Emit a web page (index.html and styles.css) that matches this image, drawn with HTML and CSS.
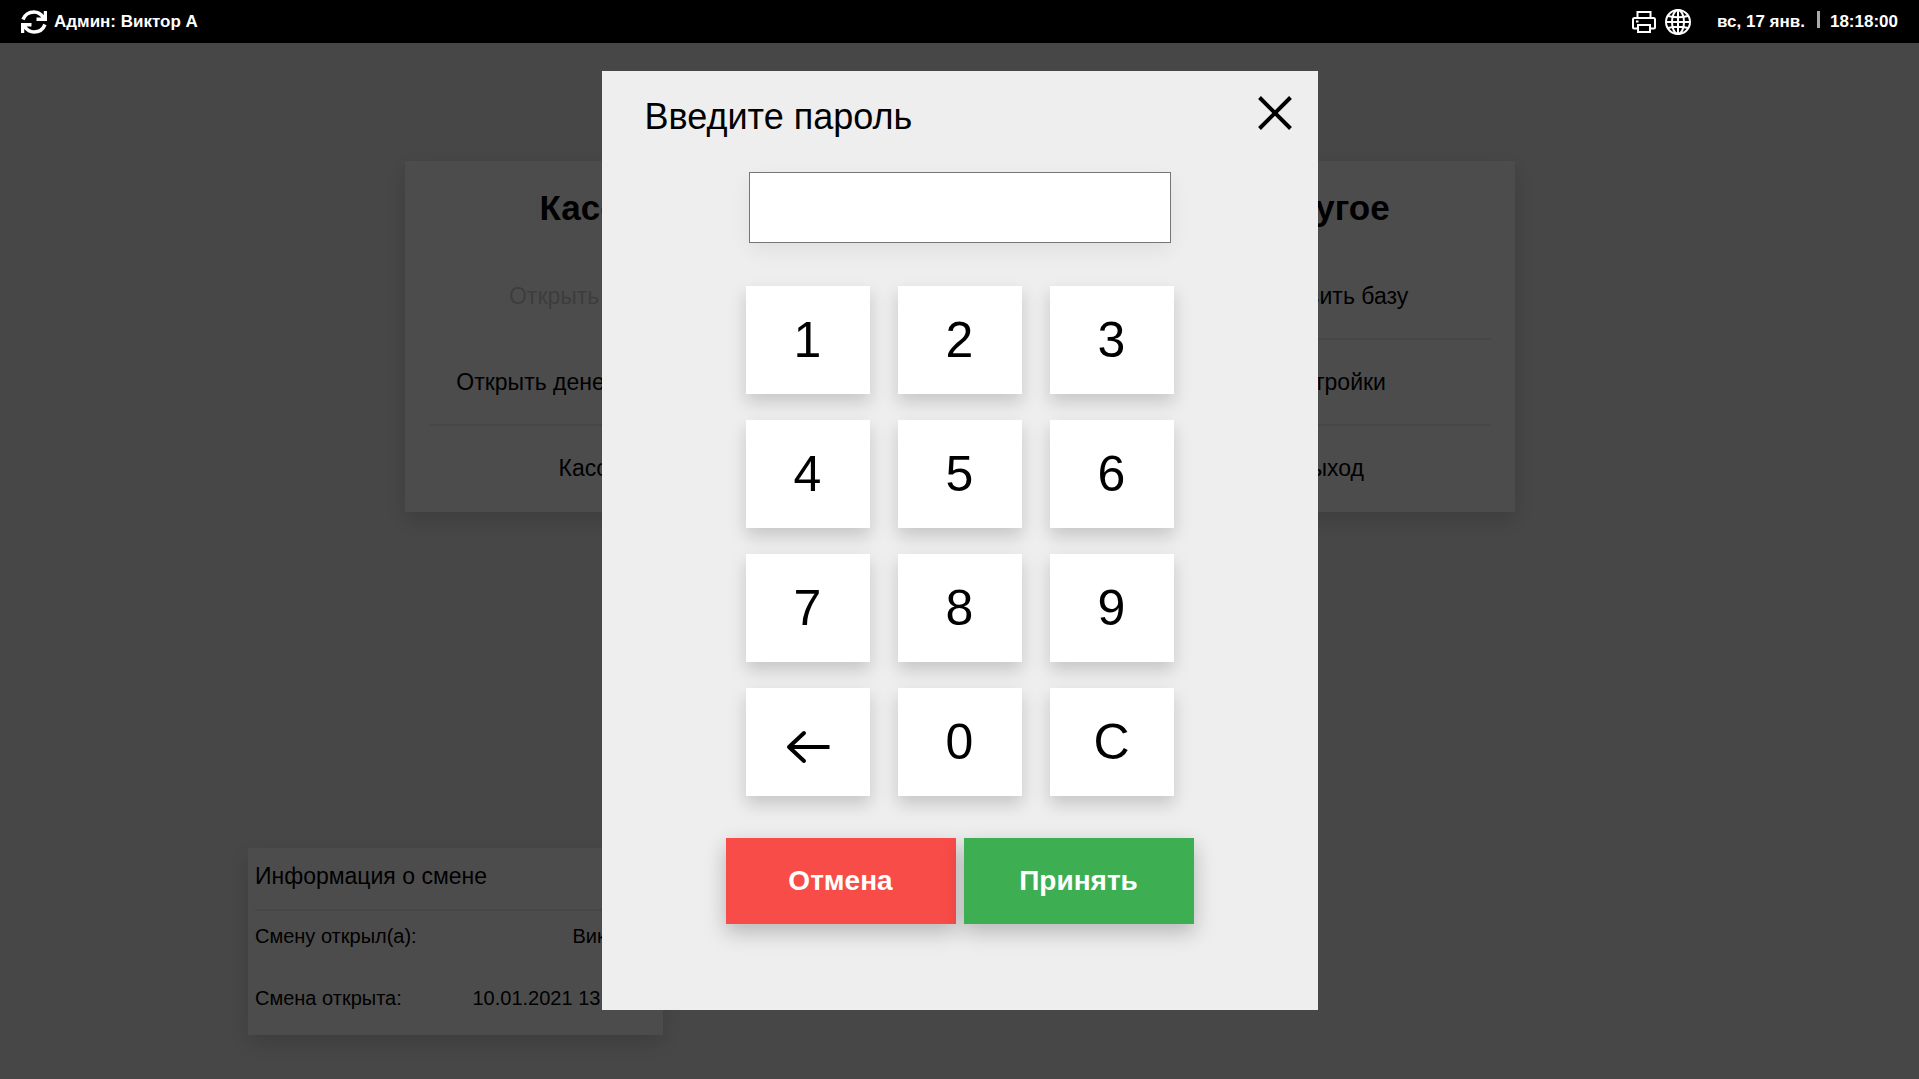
FILE: index.html
```html
<!DOCTYPE html>
<html lang="ru">
<head>
<meta charset="utf-8">
<meta name="viewport" content="width=device-width, initial-scale=1">
<title>Введите пароль</title>
<link rel="stylesheet" href="styles.css">
</head>
<body>
<header class="topbar">
  <div class="user">
    <svg class="icon-sync" viewBox="0 0 26 24" fill="none" stroke="#fff" stroke-width="3.500" aria-hidden="true">
      <path d="M2 9.500C4 4.500 8.500 2 13 2C17 2 20 4 22.500 7.500"/>
      <path d="M24.500 1V9.300H15.500"/>
      <path d="M19.500 9L24 4V9Z" fill="#fff" stroke-width="1"/>
      <path d="M24 14.500C22 19.500 17.500 22 13 22C9 22 6 20 3.500 16.500"/>
      <path d="M1.500 23V14.700H10.500"/>
      <path d="M6.500 15L2 20V15Z" fill="#fff" stroke-width="1"/>
    </svg>
    <span>Админ: Виктор А</span>
  </div>
  <div class="status">
    <svg class="icon-printer" viewBox="0 0 26 24" fill="none" stroke="#fff" stroke-width="2" aria-hidden="true">
      <path d="M6.500 8V2H19.500V8"/>
      <path d="M6.500 18.500H3Q2 18.500 2 17.500V9.500Q2 8 3.500 8H22.500Q24 8 24 9.500V17.500Q24 18.500 23 18.500H19.500"/>
      <path d="M7 15H19V22H7Z"/>
      <path d="M5 11.500H7.500"/>
    </svg>
    <svg class="icon-globe" viewBox="0 0 26 26" fill="none" stroke="#fff" stroke-width="2" aria-hidden="true">
      <circle cx="13" cy="13" r="12"/>
      <ellipse cx="13" cy="13" rx="6" ry="12"/>
      <path d="M13 1V25M1 13H25M3 7Q13 9.500 23 7M3 19Q13 16.500 23 19"/>
    </svg>
    <span class="date">вс, 17 янв.</span>
    <span class="divider"></span>
    <time>18:18:00</time>
  </div>
</header>
<main class="workspace">
  <div class="panel menu">
    <section class="menu-column">
      <h2>Касса</h2>
      <button class="menu-item" disabled>Открыть смену</button>
      <button class="menu-item">Открыть денежный ящик</button>
      <button class="menu-item">Касса</button>
    </section>
    <section class="menu-column menu-column-last">
      <h2>Другое</h2>
      <button class="menu-item">Обновить базу</button>
      <button class="menu-item">Настройки</button>
      <button class="menu-item">Выход</button>
    </section>
  </div>
  <section class="panel shift">
    <h3>Информация о смене</h3>
    <dl>
      <div class="shift-row"><dt>Смену открыл(а):</dt><dd>Виктор А</dd></div>
      <div class="shift-row"><dt>Смена открыта:</dt><dd>10.01.2021 13:00:00</dd></div>
    </dl>
  </section>
  <div class="overlay">
    <form class="dialog" role="dialog" aria-labelledby="dialog-title">
      <div class="dialog-head">
        <h1 id="dialog-title"><label for="password">Введите пароль</label></h1>
        <button class="close" type="button" aria-label="Закрыть">
          <svg viewBox="0 0 34 34" fill="none" stroke="#000" stroke-width="4" aria-hidden="true"><path d="M1.500 1.500L32.500 32.500M32.500 1.500L1.500 32.500"/></svg>
        </button>
      </div>
      <input class="password" id="password" type="password">
      <div class="keypad">
        <button class="key" type="button">1</button>
        <button class="key" type="button">2</button>
        <button class="key" type="button">3</button>
        <button class="key" type="button">4</button>
        <button class="key" type="button">5</button>
        <button class="key" type="button">6</button>
        <button class="key" type="button">7</button>
        <button class="key" type="button">8</button>
        <button class="key" type="button">9</button>
        <button class="key key-back" type="button" aria-label="Стереть">
          <svg viewBox="0 0 44 34" fill="none" stroke="#000" stroke-width="4" aria-hidden="true"><path d="M3 17H43.500"/><path d="M18 3L3 17L18 31" stroke-linecap="round" stroke-linejoin="round"/></svg>
        </button>
        <button class="key" type="button">0</button>
        <button class="key" type="button">C</button>
      </div>
      <div class="actions">
        <button class="action cancel" type="button">Отмена</button>
        <button class="action accept" type="submit">Принять</button>
      </div>
    </form>
  </div>
</main>
</body>
</html>
```
FILE: styles.css
```css
* {
  box-sizing: border-box;
}

body {
  margin: 0;
  min-height: 100vh;
  display: flex;
  flex-direction: column;
  background: #eee;
  color: #000;
  font-family: "Liberation Sans", Arial, sans-serif;
}

h1, h2, h3, dl, dd {
  margin: 0;
}

button {
  padding: 0;
  border: 0;
  background: none;
  color: inherit;
  font: inherit;
  cursor: pointer;
}

svg {
  display: block;
}

.topbar {
  height: 43px;
  padding: 0 21px;
  display: flex;
  justify-content: space-between;
  align-items: center;
  background: #000;
  color: #fff;
  font-size: 17px;
  font-weight: 700;
}

.user, .status {
  display: flex;
  align-items: center;
}

.user {
  gap: 7px;
}

.icon-sync, .icon-printer {
  width: 26px;
  height: 24px;
}

.icon-globe {
  width: 26px;
  height: 26px;
  margin: 0 26px 0 8px;
}

.divider {
  width: 3px;
  height: 17px;
  margin: 0 10px 4px 12px;
  background: #aaa;
}

.workspace {
  position: relative;
  flex: 1;
  display: flex;
  flex-direction: column;
  padding: 118px 0 44px;
}

.panel {
  background: #fff;
  box-shadow: 0 8px 20px rgba(0, 0, 0, .15);
}

.menu {
  width: 1110px;
  max-width: 100%;
  margin: 0 auto;
  display: grid;
  grid-template-columns: repeat(3, 1fr);
}

.menu-column {
  display: flex;
  flex-direction: column;
  padding: 0 24px;
}

.menu-column-last {
  grid-column: 3;
}

.menu-column h2 {
  padding: 26px 0;
  font-size: 35px;
  line-height: 41px;
  text-align: center;
}

.menu-item {
  height: 86px;
  border-bottom: 2px solid #eaeaea;
  font-size: 23px;
}

.menu-item:last-child {
  border-color: transparent;
}

.menu-item:disabled {
  opacity: .2;
}

.shift {
  width: 415px;
  margin: auto 0 0 248px;
  padding: 0 7px;
}

.shift h3 {
  height: 63px;
  padding-top: 14px;
  border-bottom: 2px solid #eaeaea;
  font-size: 23px;
  font-weight: 400;
  line-height: 28px;
}

.shift-row {
  display: flex;
  justify-content: space-between;
  height: 62px;
  padding-top: 14px;
  font-size: 20px;
  line-height: 23px;
}

.overlay {
  position: absolute;
  inset: 0;
  display: flex;
  justify-content: center;
  align-items: flex-start;
  padding-top: 28px;
  background: rgba(0, 0, 0, .7);
}

.dialog {
  width: 716px;
  padding: 25px 26px 86px 43px;
  display: flex;
  flex-direction: column;
  background: #eee;
}

.dialog-head {
  display: flex;
  justify-content: space-between;
  align-items: flex-start;
}

.dialog-head h1 {
  font-size: 36px;
  font-weight: 400;
  line-height: 41px;
}

.close svg {
  width: 34px;
  height: 34px;
}

/* the dialog's side paddings differ, so the centred blocks make up for it */
.password, .keypad, .actions {
  align-self: center;
  margin-right: 17px;
}

.password {
  width: 422px;
  height: 71px;
  margin-top: 35px;
  padding: 0 16px;
  border: 1px solid #767676;
  background: #fff;
  font-size: 36px;
  box-shadow: 0 8px 20px rgba(0, 0, 0, .06);
}

.keypad {
  margin-top: 43px;
  display: grid;
  grid-template-columns: repeat(3, 124px);
  gap: 26px 28px;
}

.key {
  height: 108px;
  background: #fff;
  font-size: 50px;
  line-height: 58px;
  box-shadow: 0 8px 16px rgba(0, 0, 0, .17);
}

.key-back {
  display: flex;
  justify-content: center;
  align-items: center;
  padding-top: 10px;
}

.key-back svg {
  width: 44px;
  height: 34px;
}

.actions {
  margin-top: 42px;
  display: flex;
  gap: 8px;
}

.action {
  width: 230px;
  height: 86px;
  color: #fff;
  font-size: 28px;
  font-weight: 700;
  box-shadow: 0 8px 20px rgba(0, 0, 0, .24);
}

.cancel {
  background: #f84c48;
}

.accept {
  background: #3eae52;
}
```
